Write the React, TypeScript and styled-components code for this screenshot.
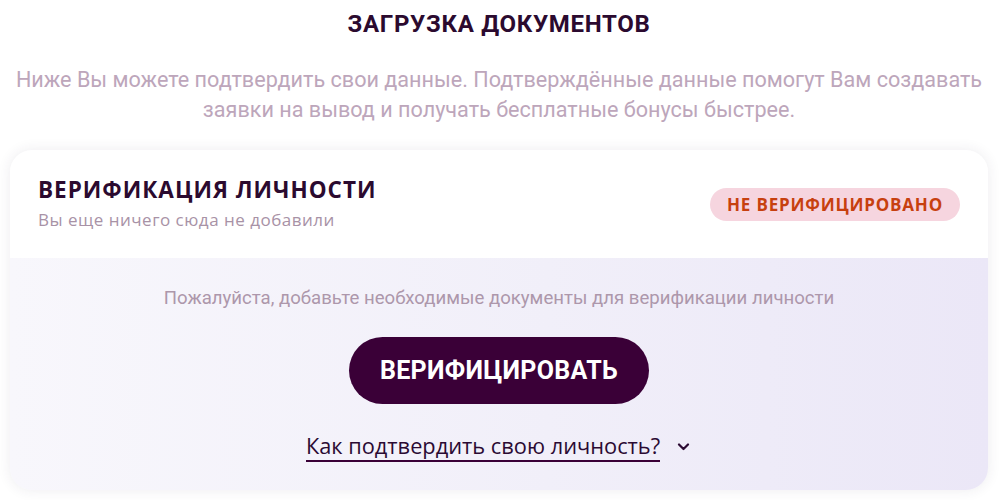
import React from "react";
import styled, { createGlobalStyle } from "styled-components";

const GlobalStyle = createGlobalStyle`
    html, body {
        margin: 0;
        padding: 0;
        background: #ffffff;
    }
    body {
        font-family: "Open Sans", "Liberation Sans", sans-serif;
    }
`

const Page = styled.div`
    width: 1000px;
    height: 500px;
    box-sizing: border-box;
    padding: 8px 12px 0 10px;
    display: flex;
    flex-direction: column;
    align-items: center;
`

const Title = styled.h1`
    margin: 0;
    font-family: Roboto, "Liberation Sans", sans-serif;
    font-weight: 700;
    font-size: 24px;
    line-height: 32px;
    color: #2b0a2f;
    letter-spacing: 0.7px;
`

const Lead = styled.p`
    margin: 25px 0 0;
    font-family: Roboto, "Liberation Sans", sans-serif;
    font-size: 21.6px;
    line-height: 30px;
    color: #bda6bb;
    text-align: center;
    white-space: nowrap;
`

const Card = styled.section`
    margin-top: 25px;
    width: 978px;
    height: 340px;
    border-radius: 22px;
    overflow: hidden;
    display: flex;
    flex-direction: column;
    box-shadow: 0 0 14px rgba(60, 40, 80, 0.09), inset 0 0 10px rgba(60, 40, 80, 0.04);
`

const CardHeader = styled.div`
    height: 108px;
    flex-shrink: 0;
    box-sizing: border-box;
    padding: 25px 28px 0 28px;
    display: flex;
    justify-content: space-between;
    align-items: flex-start;
    background: #ffffff;
`

const HeaderText = styled.div`
    display: flex;
    flex-direction: column;
`

const CardTitle = styled.h2`
    margin: 0;
    font-weight: 700;
    font-size: 22.5px;
    line-height: 30px;
    letter-spacing: 1px;
    color: #2b0a2f;
`

const CardSubtitle = styled.span`
    margin-top: 3px;
    font-size: 17px;
    line-height: 24px;
    letter-spacing: 0.5px;
    color: #a892a6;
`

const Badge = styled.span`
    margin-top: 13px;
    height: 33px;
    padding: 0 17px;
    border-radius: 17px;
    background: #f6d5df;
    color: #c7400f;
    font-weight: 700;
    font-size: 17px;
    letter-spacing: 0.8px;
    display: flex;
    align-items: center;
`

const CardBody = styled.div`
    flex: 1;
    display: flex;
    flex-direction: column;
    align-items: center;
    padding-top: 27px;
    background: linear-gradient(90deg, #f8f7fc 0%, #f1eff9 55%, #ebe7f7 100%);
`

const Hint = styled.p`
    margin: 0;
    font-family: Roboto, "Liberation Sans", sans-serif;
    font-size: 18.6px;
    line-height: 26px;
    color: #ad97ab;
`

const VerifyButton = styled.button`
    margin-top: 26px;
    width: 300px;
    height: 67px;
    border: none;
    border-radius: 34px;
    background: #3a0037;
    color: #ffffff;
    font-family: Roboto, "Liberation Sans", sans-serif;
    font-weight: 700;
    font-size: 25px;
    letter-spacing: 0.3px;
    cursor: pointer;
`

const HowTo = styled.div`
    margin-top: 28px;
    display: flex;
    align-items: center;
    gap: 17px;
    margin-left: -2px;
`

const HowToLink = styled.a`
    font-size: 21.8px;
    line-height: 28px;
    font-weight: 500;
    color: #2b0a33;
    text-decoration: none;
    border-bottom: 2px solid #3a0037;
    cursor: pointer;
`

const Chevron = styled.svg`
    width: 13px;
    height: 8px;
`

export default function App(): JSX.Element {
    return (
        <>
            <GlobalStyle />
            <Page>
                <Title>ЗАГРУЗКА ДОКУМЕНТОВ</Title>
                <Lead>
                    Ниже Вы можете подтвердить свои данные. Подтверждённые данные помогут Вам создавать
                    <br />
                    заявки на вывод и получать бесплатные бонусы быстрее.
                </Lead>
                <Card>
                    <CardHeader>
                        <HeaderText>
                            <CardTitle>ВЕРИФИКАЦИЯ ЛИЧНОСТИ</CardTitle>
                            <CardSubtitle>Вы еще ничего сюда не добавили</CardSubtitle>
                        </HeaderText>
                        <Badge>НЕ ВЕРИФИЦИРОВАНО</Badge>
                    </CardHeader>
                    <CardBody>
                        <Hint>Пожалуйста, добавьте необходимые документы для верификации личности</Hint>
                        <VerifyButton type="button">ВЕРИФИЦИРОВАТЬ</VerifyButton>
                        <HowTo>
                            <HowToLink>Как подтвердить свою личность?</HowToLink>
                            <Chevron viewBox="0 0 13 8" fill="none">
                                <path d="M2 1.5 L6.5 6 L11 1.5" stroke="#2b0a33" strokeWidth="2.2" strokeLinecap="round" strokeLinejoin="round" />
                            </Chevron>
                        </HowTo>
                    </CardBody>
                </Card>
            </Page>
        </>
    );
}
